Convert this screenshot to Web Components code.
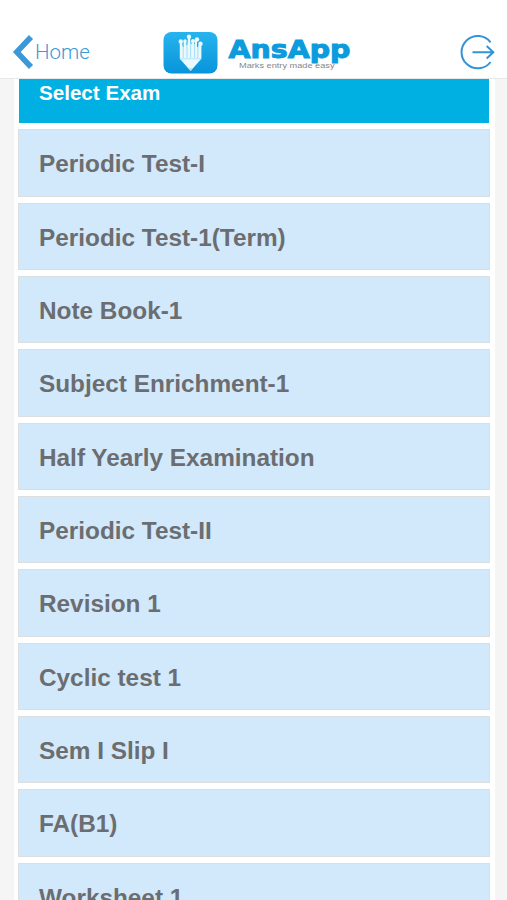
<!DOCTYPE html>
<html lang="en">
	<head>
		<meta charset="utf-8">
		<title>AnsApp</title>
		<style>
			html, body{height:100%;}
			body{margin:0; background:#f5f5f5; overflow:hidden; font-family:"Liberation Sans", Arial, sans-serif;}
		</style>
	</head>
	<body>
		<exam-screen>
			<app-header slot="header">
				<back-link slot="left">Home</back-link>
				<app-logo></app-logo>
				<logout-icon slot="right"></logout-icon>
			</app-header>
			<exam-list heading="Select Exam">
				<exam-item>Periodic Test-I</exam-item>
				<exam-item>Periodic Test-1(Term)</exam-item>
				<exam-item>Note Book-1</exam-item>
				<exam-item>Subject Enrichment-1</exam-item>
				<exam-item>Half Yearly Examination</exam-item>
				<exam-item>Periodic Test-II</exam-item>
				<exam-item>Revision 1</exam-item>
				<exam-item>Cyclic test 1</exam-item>
				<exam-item>Sem I Slip I</exam-item>
				<exam-item>FA(B1)</exam-item>
				<exam-item>Worksheet 1</exam-item>
			</exam-list>
		</exam-screen>

		<template id="screenTpl">
			<style>
				:host{display:flex; flex-direction:column; height:100vh; overflow:hidden;}
				main{flex:1; min-height:0; overflow:hidden; padding:0 12px 0 14px;}
			</style>
			<slot name="header"></slot>
			<main><slot></slot></main>
		</template>

		<template id="headerTpl">
			<style>
				:host{display:grid; grid-template-columns:163px 1fr 47px; align-items:start; flex:none; box-sizing:border-box; height:79px; padding-top:30px; background:#fff; border-bottom:1px solid #e6e8ea;}
			</style>
			<slot name="left"></slot>
			<slot></slot>
			<slot name="right"></slot>
		</template>

		<template id="backTpl">
			<style>
				:host{display:flex; align-items:center; height:44px; padding-left:12px; color:#3c98d7; font:300 20.5px/46px Roboto, "Liberation Sans", sans-serif;}
				svg{display:block; margin-right:1px;}
			</style>
			<svg width="22" height="36" viewBox="0 0 22 36" fill="none" stroke="#3c98d7" stroke-width="5.6">
				<path d="M19 3 4.8 18 19 33"/>
			</svg>
			<slot></slot>
		</template>

		<template id="logoTpl">
			<style>
				:host{display:block;}
				svg{display:block;}
				.name{font:bold 24.5px "DejaVu Sans", sans-serif; fill:#0c9bdc; stroke:#0c9bdc; stroke-width:1px;}
				.tag{font:7.6px "Liberation Sans", Arial, sans-serif; fill:#858589;}
			</style>
			<svg width="192" height="46" viewBox="163 30 192 46">
				<defs>
					<linearGradient id="tile" x1="0" y1="0" x2="0" y2="1">
						<stop offset="0" stop-color="#27b4ee"/>
						<stop offset="1" stop-color="#0794db"/>
					</linearGradient>
				</defs>
				<rect x="163.5" y="32" width="54" height="41.5" rx="8" fill="url(#tile)"/>
				<!-- pencils bundled over one tip -->
				<g fill="#eaf9fe">
					<circle cx="180.8" cy="41.5" r="2.2"/>
					<circle cx="185" cy="41" r="1.8"/>
					<circle cx="189" cy="36.8" r="2.2"/>
					<circle cx="193" cy="41" r="2"/>
					<circle cx="197" cy="39.5" r="2.2"/>
					<circle cx="200.5" cy="43.8" r="2.2"/>
					<path d="M179.8 42h2.2l.8 5h.8V42h2.8v3h1l.6-8h2l.6 7h1v-3h2.4v3h.8V40h2.2v7h1l1-3h2.4v14.8L190.6 71l-10.8-12.2z"/>
				</g>
				<path d="M183.2 47v11M187 45v13M190.6 44v14M194.6 44v14M197.8 47v11" stroke="#8fd8f5" stroke-width=".8"/>
				<path d="M180 58.8h21" stroke="#a5e0f7" stroke-width=".8"/>
				<path d="M188.4 68.3h4.4l-2.2 2.7z" fill="#a5e0f7"/>
				<text class="name" x="228.5" y="57.5" textLength="122" lengthAdjust="spacingAndGlyphs">AnsApp</text>
				<text class="tag" x="239" y="68.3" textLength="95.5" lengthAdjust="spacingAndGlyphs">Marks entry made easy</text>
			</svg>
		</template>

		<template id="logoutTpl">
			<style>
				:host{display:block; padding-top:4px;}
				svg{display:block;}
			</style>
			<svg width="36" height="36" viewBox="460 34 36 36" fill="none" stroke="#3593d5" stroke-width="2">
				<path d="M490.6 42.3A16.2 16.2 0 1 0 490.6 62M472.5 52.2h20.5M486.7 46l6.6 6.2-6.6 6.2"/>
			</svg>
		</template>

		<template id="listTpl">
			<style>
				:host{display:block; height:100%; padding:0 5px 0 4px; background:#fff;}
				h2{box-sizing:border-box; height:44.4px; margin:0 1px 6px; padding:0 20px; background:#00b0e3; color:#fff; font-size:20.6px; line-height:28px;}
				.items{display:flex; flex-direction:column; gap:6px;}
			</style>
			<h2></h2>
			<div class="items"><slot></slot></div>
		</template>

		<template id="itemTpl">
			<style>
				:host{display:block; flex:none; box-sizing:border-box; height:67.33px; padding-left:20px; border:1px solid #dcdfe0; background:#d2e9fc; color:#6b6d70; font-weight:bold; font-size:24.35px; line-height:67px;}
			</style>
			<slot></slot>
		</template>

		<script>
			// clone a template into the shadow root of each element
			function makeComponent(name, tplId){
				customElements.define(name, class extends HTMLElement{
					constructor(){
						super();
						this.attachShadow({mode : 'open'});
						this.shadowRoot.append(document.getElementById(tplId).content.cloneNode(true));
					}
				});
			}
			makeComponent('exam-screen', 'screenTpl');
			makeComponent('app-header', 'headerTpl');
			makeComponent('back-link', 'backTpl');
			makeComponent('app-logo', 'logoTpl');
			makeComponent('logout-icon', 'logoutTpl');
			makeComponent('exam-item', 'itemTpl');

			// the list has its title in an attribute
			class ExamList extends HTMLElement{
				connectedCallback(){
					this.attachShadow({mode : 'open'});
					this.shadowRoot.append(listTpl.content.cloneNode(true));
					this.shadowRoot.querySelector('h2').textContent = this.getAttribute('heading');
				}
			}
			customElements.define('exam-list', ExamList);
		</script>
	</body>
</html>
